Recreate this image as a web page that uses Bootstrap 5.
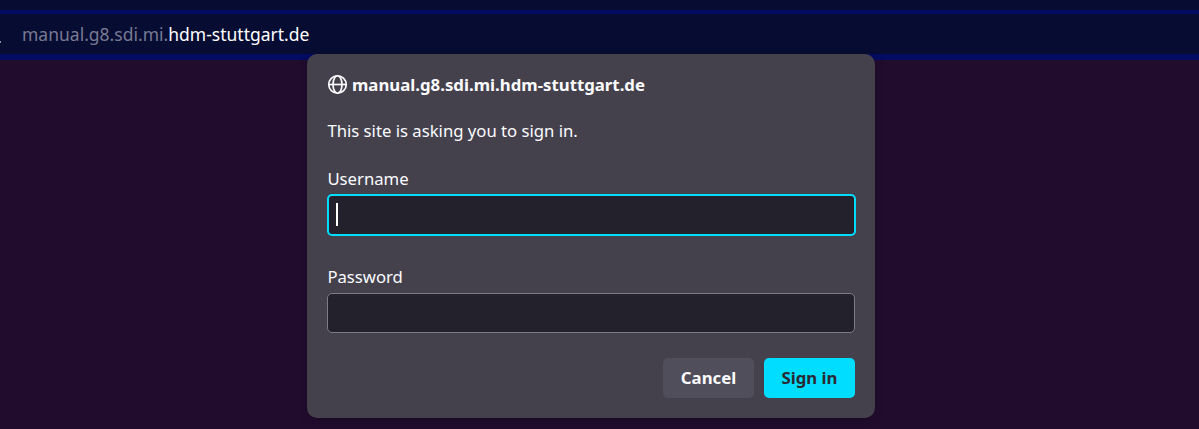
<!DOCTYPE html>
<html lang="en">
<head>
<meta charset="utf-8">
<meta name="viewport" content="width=device-width, initial-scale=1">
<title>Sign in</title>
<link href="https://cdn.jsdelivr.net/npm/bootstrap@5.3.0/dist/css/bootstrap.min.css" rel="stylesheet">
<style>
  body { background: #210c2e; font-family: "Noto Sans", sans-serif; font-size: 16.7px; line-height: 24px; color: #fbfbfe; height: 429px; }
  .toolbar { height: 60px; background: #070c32; }
  .url-bar { margin-top: 10px; height: 50px; border-top: 4px solid #040b62; border-bottom: 6px solid #040b62; padding-left: 22px; font-size: 17.5px; }
  .url-host { color: #777a92; }
  .lock-edge { left: 0; top: 41px; width: 1px; height: 2px; background: #8c8f9f; }
  .auth-dialog { left: 307px; top: 54px; width: 568px; height: 364px; padding: 19px 20px 20px; border-radius: 10px; background: #44414d; box-shadow: 0 2px 8px rgba(0,0,0,.22); }
  .dialog-title { gap: 4px; height: 24px; font-size: 16.8px; }
  .dialog-title svg { margin-top: -1px; }
  .dialog-message { margin: 22px 0 24px; padding-left: .4px; }
  .auth-dialog .form-label { display: block; height: 24px; margin: 0 0 3px; padding-left: .4px; }
  .auth-dialog .password-label { margin-bottom: 4px; }
  .password-group { margin-top: 29px; }
  .auth-dialog .form-control { height: 40px; padding: 0 8px; border: 1px solid #7d7b84; border-radius: 5px; background: #23212b; color: #fbfbfe; }
  .auth-dialog .is-active { width: 529px; height: 42px; border: 2px solid #00ddff; border-radius: 5px; padding: 0 7px 1px; }
  .caret { width: 2px; height: 23px; background: #fff; }
  .auth-dialog .btn { width: 91px; height: 40px; padding: 0; border: 0; border-radius: 5px; font-size: 16.76px; font-weight: 700; }
  .dialog-actions { gap: 10px; }
  .btn-cancel, .btn-cancel:hover { background: #504e5a; color: #fbfbfe; }
  .btn-sign, .btn-sign:hover { background: #00ddff; color: #2b2a33; }
</style>
</head>
<body class="m-0 overflow-hidden position-relative">
  <header class="toolbar d-flex flex-column">
    <div class="url-bar d-flex align-items-center"><span class="url-host">manual.g8.sdi.mi.</span><span class="text-white">hdm-stuttgart.de</span></div>
    <span class="lock-edge position-absolute"></span>
  </header>
  <main class="auth-dialog position-absolute d-flex flex-column">
    <div class="dialog-title d-flex align-items-center fw-bold">
      <svg width="21" height="21" viewBox="0 0 21 21" fill="none" stroke="#fbfbfe" stroke-width="1.7" aria-hidden="true">
        <circle cx="10.5" cy="10.5" r="8.75"/>
        <ellipse cx="10.5" cy="10.5" rx="4.5" ry="8.75"/>
        <path d="M1.75 10.5h17.5"/>
      </svg>
      <span>manual.g8.sdi.mi.hdm-stuttgart.de</span>
    </div>
    <p class="dialog-message">This site is asking you to sign in.</p>
    <div>
      <span class="form-label">Username</span>
      <div class="form-control is-active d-flex align-items-center"><span class="caret"></span></div>
    </div>
    <div class="password-group">
      <label class="form-label password-label" for="pw">Password</label>
      <input class="form-control" id="pw" type="password">
    </div>
    <div class="dialog-actions d-flex justify-content-end mt-auto">
      <button class="btn btn-cancel" type="button">Cancel</button>
      <button class="btn btn-sign" type="button">Sign in</button>
    </div>
  </main>
<script src="https://cdn.jsdelivr.net/npm/bootstrap@5.3.0/dist/js/bootstrap.bundle.min.js"></script>
</body>
</html>
